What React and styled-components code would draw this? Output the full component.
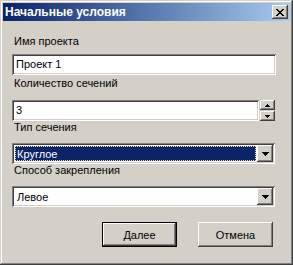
import React from "react";
import styled, { createGlobalStyle } from "styled-components";

const Global = createGlobalStyle`
  html, body { margin: 0; padding: 0; background: #d4d0c8; }
  * { box-sizing: border-box; }
`;

const FONT = `"Liberation Sans", Arial, sans-serif`;

const raised = `
  box-shadow: inset -1px -1px #404040, inset 1px 1px #ffffff,
    inset -2px -2px #808080, inset 2px 2px #d4d0c8;
`;
const sunken = `
  box-shadow: inset 1px 1px #808080, inset -1px -1px #ffffff,
    inset 2px 2px #404040, inset -2px -2px #d4d0c8;
`;

const Window = styled.div`
  width: 293px;
  height: 265px;
  padding: 3px;
  background: #d4d0c8;
  box-shadow: inset -1px -1px #404040, inset 1px 1px #d4d0c8,
    inset -2px -2px #808080, inset 2px 2px #ffffff;
  display: flex;
  flex-direction: column;
  font-family: ${FONT};
  font-size: 11px;
  color: #000;
`;

const TitleBar = styled.div`
  height: 18px;
  flex: none;
  display: flex;
  align-items: center;
  justify-content: space-between;
  padding: 0 2px 0 2px;
  background: linear-gradient(to right, #0a246a, #a6caf0);
`;

const Title = styled.span`
  color: #fff;
  font-weight: bold;
  font-size: 12px;
  line-height: 14px;
`;

const CloseButton = styled.div`
  width: 16px;
  height: 14px;
  background: #d4d0c8;
  ${raised}
  display: flex;
  align-items: center;
  justify-content: center;
  padding-right: 1px;
`;

const Client = styled.div`
  flex: 1;
  display: flex;
  flex-direction: column;
  padding: 14px 14px 0 9px;
`;

const Label = styled.div`
  line-height: 13px;
  height: 13px;
  padding-left: 2px;
  margin-top: ${(p) => p.$mt || 0}px;
  margin-bottom: ${(p) => p.$mb || 0}px;
  white-space: nowrap;
`;

const Field = styled.div`
  height: 21px;
  background: #fff;
  ${sunken}
  display: flex;
  align-items: center;
  padding: 0 3px 0 4px;
  line-height: 13px;
  flex: ${(p) => (p.$grow ? 1 : "none")};
`;

const SpinRow = styled.div`
  display: flex;
  gap: 1px;
  height: 21px;
  padding-right: 1px;
`;

const SpinCol = styled.div`
  width: 15px;
  display: flex;
  flex-direction: column;
`;

const SpinBtn = styled.div`
  height: 10px;
  margin-top: ${(p) => (p.$down ? 1 : 0)}px;
  background: #d4d0c8;
  ${raised}
  display: flex;
  align-items: center;
  justify-content: center;
`;

const Combo = styled.div`
  height: 21px;
  background: #fff;
  ${sunken}
  display: flex;
  align-items: stretch;
  padding: 2px;
  margin-right: 1px;
`;

const ComboValue = styled.div`
  flex: 1;
  margin: 1px;
  display: flex;
  align-items: center;
  padding-left: 2px;
  background: ${(p) => (p.$selected ? "#0a246a" : "#fff")};
  color: ${(p) => (p.$selected ? "#fff" : "#000")};
  outline: ${(p) => (p.$selected ? "1px dotted #f5e39a" : "none")};
  outline-offset: -1px;
`;

const DropBtn = styled.div`
  width: 16px;
  flex: none;
  background: #d4d0c8;
  ${raised}
  display: flex;
  align-items: center;
  justify-content: center;
`;

const ButtonRow = styled.div`
  display: flex;
  justify-content: flex-end;
  gap: 21px;
  margin-top: 15px;
  padding-right: 3px;
`;

const Button = styled.div`
  width: 75px;
  height: 25px;
  background: #d4d0c8;
  display: flex;
  align-items: center;
  justify-content: center;
  ${(p) =>
    p.$default
      ? `box-shadow: inset 0 0 0 1px #000, inset -2px -2px #404040, inset 2px 2px #ffffff,
    inset -3px -3px #808080, inset 3px 3px #d4d0c8;`
      : raised}
`;

const CloseIcon = () => (
  <svg width="8" height="7" viewBox="0 0 8 7" shapeRendering="crispEdges">
    {[0, 1, 2, 3, 4, 5, 6].map((i) => (
      <React.Fragment key={i}>
        <rect x={i} y={i} width="2" height="1" fill="#000" />
        <rect x={6 - i} y={i} width="2" height="1" fill="#000" />
      </React.Fragment>
    ))}
  </svg>
);

const Arrow = ({ w, up }) => {
  const rows = Math.ceil(w / 2);
  return (
    <svg width={w} height={rows} viewBox={`0 0 ${w} ${rows}`} shapeRendering="crispEdges">
      {Array.from({ length: rows }).map((_, i) => (
        <rect
          key={i}
          x={i}
          y={up ? rows - 1 - i : i}
          width={w - 2 * i}
          height="1"
          fill="#000"
        />
      ))}
    </svg>
  );
};

export default function App() {
  return (
    <>
      <Global />
      <Window>
        <TitleBar>
          <Title>Начальные условия</Title>
          <CloseButton>
            <CloseIcon />
          </CloseButton>
        </TitleBar>
        <Client>
          <Label $mb={6}>Имя проекта</Label>
          <Field>Проект 1</Field>
          <Label $mt={2} $mb={10}>Количество сечений</Label>
          <SpinRow>
            <Field $grow>3</Field>
            <SpinCol>
              <SpinBtn>
                <Arrow w={5} up />
              </SpinBtn>
              <SpinBtn $down>
                <Arrow w={5} />
              </SpinBtn>
            </SpinCol>
          </SpinRow>
          <Label $mb={9}>Тип сечения</Label>
          <Combo>
            <ComboValue $selected>Круглое</ComboValue>
            <DropBtn>
              <Arrow w={7} />
            </DropBtn>
          </Combo>
          <Label $mb={9}>Способ закрепления</Label>
          <Combo>
            <ComboValue>Левое</ComboValue>
            <DropBtn>
              <Arrow w={7} />
            </DropBtn>
          </Combo>
          <ButtonRow>
            <Button $default>Далее</Button>
            <Button>Отмена</Button>
          </ButtonRow>
        </Client>
      </Window>
    </>
  );
}
